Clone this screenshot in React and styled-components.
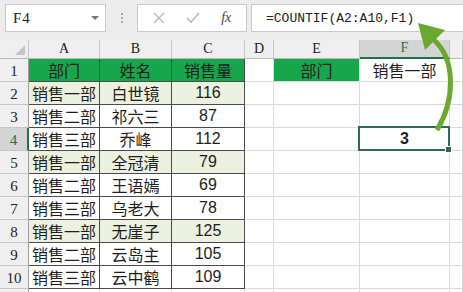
import React from "react";
import styled, { createGlobalStyle } from "styled-components";

const Global = createGlobalStyle`
  body {
    margin: 0;
    background: #fff;
    font-family: "Liberation Sans", "Noto Sans CJK SC", sans-serif;
  }
`;

const Page = styled.div`
  position: relative;
  width: 463px;
  height: 292px;
  overflow: hidden;
  background: #fff;
`;

const Toolbar = styled.div`
  display: flex;
  align-items: flex-start;
  height: 40px;
  padding: 4px 0 0 5px;
  box-sizing: border-box;
  background: #ececec;
`;

const NameBox = styled.div`
  width: 101px;
  height: 28px;
  box-sizing: border-box;
  display: flex;
  align-items: center;
  justify-content: space-between;
  padding: 0 6px 0 7px;
  background: #fff;
  border: 1px solid #c9c9c9;
  font-family: "Liberation Serif", serif;
  font-size: 15px;
  letter-spacing: 1px;
  color: #222;
`;

const Caret = styled.span`
  width: 0;
  height: 0;
  border-left: 4px solid transparent;
  border-right: 4px solid transparent;
  border-top: 4px solid #777;
`;

const Grip = styled.div`
  width: 31px;
  height: 28px;
  display: flex;
  flex-direction: column;
  align-items: center;
  justify-content: center;
  gap: 2px;
  span {
    width: 2px;
    height: 2px;
    background: #aaa;
  }
`;

const FxBox = styled.div`
  width: 110px;
  height: 28px;
  box-sizing: border-box;
  display: flex;
  align-items: center;
  justify-content: space-around;
  padding: 0 4px;
  background: #fff;
  border: 1px solid #c9c9c9;
`;

const Fx = styled.span`
  font-family: "Liberation Serif", serif;
  font-style: italic;
  font-size: 14px;
  color: #444;
`;

const Formula = styled.div`
  flex: 1;
  margin-left: 4px;
  height: 28px;
  box-sizing: border-box;
  display: flex;
  align-items: center;
  padding-left: 14px;
  background: #fff;
  border: 1px solid #c9c9c9;
  border-right: none;
  font-family: "Liberation Mono", monospace;
  font-size: 13px;
  color: #222;
`;

const Sheet = styled.div`
  display: grid;
  grid-template-columns: 29px 71px 72px 73px 29px 86px 90px 13px;
  grid-template-rows: 19px repeat(11, 23px);
`;

const ColHead = styled.div`
  display: flex;
  align-items: flex-end;
  justify-content: center;
  box-sizing: border-box;
  padding-bottom: 1px;
  background: ${(p) => (p.$active ? "#d4d4d4" : "#efefef")};
  color: ${(p) => (p.$active ? "#217346" : "#222")};
  border-right: 1px solid #c6c6c6;
  border-bottom: ${(p) => (p.$active ? "2px solid #217346" : "1px solid #b9b9b9")};
  font-family: "Liberation Serif", serif;
  font-size: 14px;
`;

const Corner = styled(ColHead)`
  position: relative;
  &::after {
    content: "";
    position: absolute;
    right: 3px;
    bottom: 3px;
    border-left: 10px solid transparent;
    border-bottom: 10px solid #c5c5c5;
  }
`;

const RowHead = styled.div`
  display: flex;
  align-items: flex-end;
  justify-content: center;
  box-sizing: border-box;
  padding-bottom: 1px;
  background: ${(p) => (p.$active ? "#d4d4d4" : "#efefef")};
  color: ${(p) => (p.$active ? "#217346" : "#222")};
  border-right: ${(p) => (p.$active ? "2px solid #217346" : "1px solid #9e9e9e")};
  border-bottom: 1px solid #c6c6c6;
  font-family: "Liberation Serif", serif;
  font-size: 15px;
`;

const Cell = styled.div`
  position: relative;
  display: flex;
  align-items: center;
  justify-content: center;
  box-sizing: border-box;
  background: ${(p) => p.$bg || "#fff"};
  border-right: 1px solid ${(p) => (p.$table ? "#4a4a4a" : "#dadada")};
  border-bottom: 1px solid ${(p) => (p.$table ? "#4a4a4a" : "#dadada")};
  font-family: ${(p) =>
    p.$num
      ? '"Liberation Sans", sans-serif'
      : '"Noto Sans CJK SC", sans-serif'};
  font-size: 16px;
  font-weight: ${(p) => (p.$bold ? 700 : 400)};
  color: #1e1e1e;
  white-space: nowrap;

  ${(p) =>
    p.$selected &&
    `
    &::after {
      content: "";
      position: absolute;
      inset: -2px -1px -1px -2px;
      border: 2px solid #2f6b4f;
    }
    &::before {
      content: "";
      position: absolute;
      right: -3px;
      bottom: -3px;
      width: 5px;
      height: 5px;
      background: #2f6b4f;
      border: 1px solid #fff;
      z-index: 1;
    }
  `}
`;

const Arrow = styled.svg`
  position: absolute;
  left: 0;
  top: 0;
  pointer-events: none;
`;

const GREEN = "#18a64c";
const PALE = "#ebf1de";

const rows = [
  ["销售一部", "白世镜", 116],
  ["销售二部", "祁六三", 87],
  ["销售三部", "乔峰", 112],
  ["销售一部", "全冠清", 79],
  ["销售二部", "王语嫣", 69],
  ["销售三部", "乌老大", 78],
  ["销售一部", "无崖子", 125],
  ["销售二部", "云岛主", 105],
  ["销售三部", "云中鹤", 109],
];

const cols = ["A", "B", "C", "D", "E", "F", ""];

export default function App() {
  return (
    <Page>
      <Global />
      <Toolbar>
        <NameBox>
          F4
          <Caret />
        </NameBox>
        <Grip>
          <span />
          <span />
          <span />
        </Grip>
        <FxBox>
          <svg width="12" height="12" viewBox="0 0 12 12">
            <path d="M1 1 L11 11 M11 1 L1 11" stroke="#b8b8b8" strokeWidth="1.4" />
          </svg>
          <svg width="14" height="12" viewBox="0 0 14 12">
            <path d="M1 6 L5 10 L13 1" stroke="#b8b8b8" strokeWidth="1.6" fill="none" />
          </svg>
          <Fx>fx</Fx>
        </FxBox>
        <Formula>=COUNTIF(A2:A10,F1)</Formula>
      </Toolbar>

      <Sheet>
        <Corner />
        {cols.map((c, i) => (
          <ColHead key={i} $active={c === "F"}>
            {c}
          </ColHead>
        ))}

        <RowHead>1</RowHead>
        <Cell $table $bg={GREEN}>部门</Cell>
        <Cell $table $bg={GREEN}>姓名</Cell>
        <Cell $table $bg={GREEN}>销售量</Cell>
        <Cell />
        <Cell $bg={GREEN}>部门</Cell>
        <Cell>销售一部</Cell>
        <Cell />

        {rows.map((r, i) => {
          const n = i + 2;
          const bg = r[0] === "销售一部" ? PALE : "#fff";
          return (
            <React.Fragment key={n}>
              <RowHead $active={n === 4}>{n}</RowHead>
              <Cell $table $bg={bg}>{r[0]}</Cell>
              <Cell $table $bg={bg}>{r[1]}</Cell>
              <Cell $table $num $bg={bg}>{r[2]}</Cell>
              <Cell />
              <Cell />
              {n === 4 ? (
                <Cell $num $bold $selected>3</Cell>
              ) : (
                <Cell />
              )}
              <Cell />
            </React.Fragment>
          );
        })}

        <RowHead />
        {cols.map((c, i) => (
          <Cell key={i} />
        ))}
      </Sheet>

      <Arrow width="463" height="292" viewBox="0 0 463 292">
        <path
          d="M437 130 C455 100 456 60 434 40"
          stroke="#6aa92f"
          strokeWidth="5"
          fill="none"
        />
        <path d="M418 23 L445 30 L425 50 Z" fill="#6aa92f" />
      </Arrow>
    </Page>
  );
}
